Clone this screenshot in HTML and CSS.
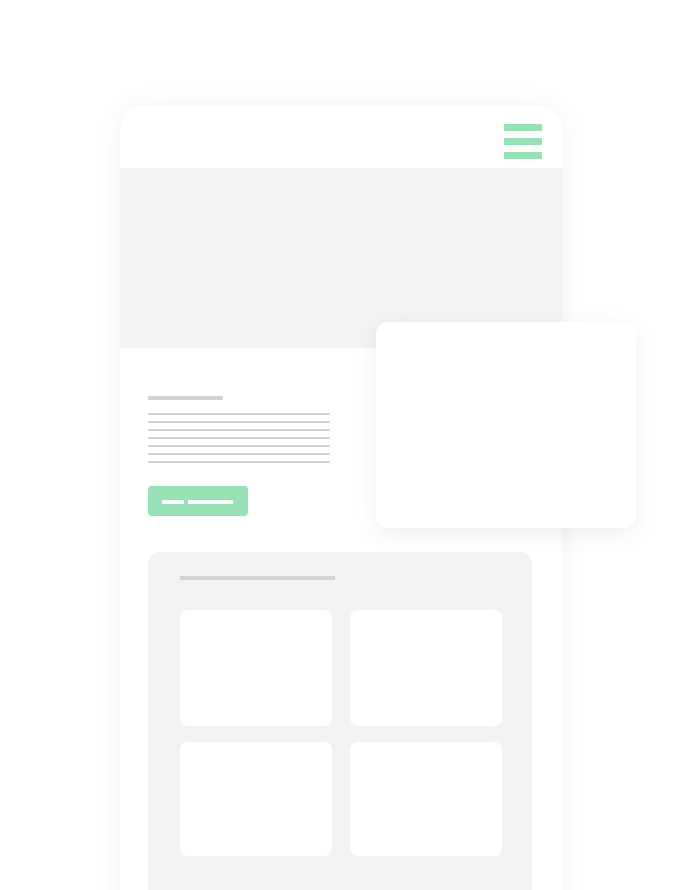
FILE: index.html
```html
<!DOCTYPE html>
<html>
<head>
<meta charset="utf-8">
<link rel="stylesheet" href="styles.css">
</head>
<body>
<div class="stage">
  <div class="phone">
    <div class="header">
      <div class="menu">
        <span class="bar"></span>
        <span class="bar"></span>
        <span class="bar"></span>
      </div>
    </div>
    <div class="hero"></div>
    <div class="content">
      <div class="title"></div>
      <div class="lines">
        <span class="line"></span>
        <span class="line"></span>
        <span class="line"></span>
        <span class="line"></span>
        <span class="line"></span>
        <span class="line"></span>
        <span class="line"></span>
      </div>
      <div class="button">
        <span class="btn-a"></span>
        <span class="btn-b"></span>
      </div>
      <div class="section">
        <div class="section-title"></div>
        <div class="grid">
          <div class="card"></div>
          <div class="card"></div>
          <div class="card"></div>
          <div class="card"></div>
        </div>
      </div>
    </div>
    <div class="float-card"></div>
  </div>
</div>
</body>
</html>
```
FILE: styles.css
```css
html, body {
  margin: 0;
  padding: 0;
  background: #ffffff;
  font-family: "Liberation Sans", Arial, sans-serif;
}
.stage {
  width: 682px;
  height: 890px;
  overflow: hidden;
  padding-top: 106px;
  padding-left: 120px;
  box-sizing: border-box;
}
.phone {
  position: relative;
  width: 442px;
  height: 900px;
  background: #ffffff;
  border-radius: 24px 24px 0 0;
  box-shadow: 0 0 28px rgba(0, 0, 0, 0.06);
}
.header {
  height: 62px;
  display: flex;
  justify-content: flex-end;
  padding-right: 20px;
  padding-top: 18px;
  box-sizing: border-box;
}
.menu {
  display: flex;
  flex-direction: column;
  gap: 7px;
}
.bar {
  display: block;
  width: 38px;
  height: 7px;
  background: #97e2b5;
}
.hero {
  height: 180px;
  background: #f2f2f2;
}
.content {
  padding: 48px 30px 0 28px;
}
.title {
  width: 75px;
  height: 4px;
  background: #d2d2d2;
}
.lines {
  margin-top: 13px;
  display: flex;
  flex-direction: column;
  gap: 6px;
}
.line {
  display: block;
  width: 182px;
  height: 2px;
  background: #d2d2d2;
}
.button {
  margin-top: 23px;
  width: 100px;
  height: 30px;
  border-radius: 4px;
  background: #97e2b5;
  display: flex;
  align-items: flex-start;
  padding: 14px 0 0 14px;
  gap: 4px;
  box-sizing: border-box;
}
.btn-a, .btn-b {
  display: block;
  height: 4px;
  background: #ffffff;
}
.btn-a { width: 22px; }
.btn-b { width: 45px; }
.section {
  margin-top: 36px;
  background: #f2f2f2;
  border-radius: 12px 12px 0 0;
  padding: 24px 30px 80px 32px;
}
.section-title {
  width: 155px;
  height: 4px;
  background: #d2d2d2;
}
.grid {
  margin-top: 30px;
  display: grid;
  grid-template-columns: 152px 152px;
  grid-template-rows: 116px 114px;
  column-gap: 18px;
  row-gap: 16px;
}
.card {
  background: #ffffff;
  border-radius: 8px;
}
.float-card {
  position: absolute;
  left: 256px;
  top: 216px;
  width: 260px;
  height: 206px;
  background: #ffffff;
  border-radius: 12px;
  box-shadow: 0 6px 24px rgba(0, 0, 0, 0.07);
}
```
